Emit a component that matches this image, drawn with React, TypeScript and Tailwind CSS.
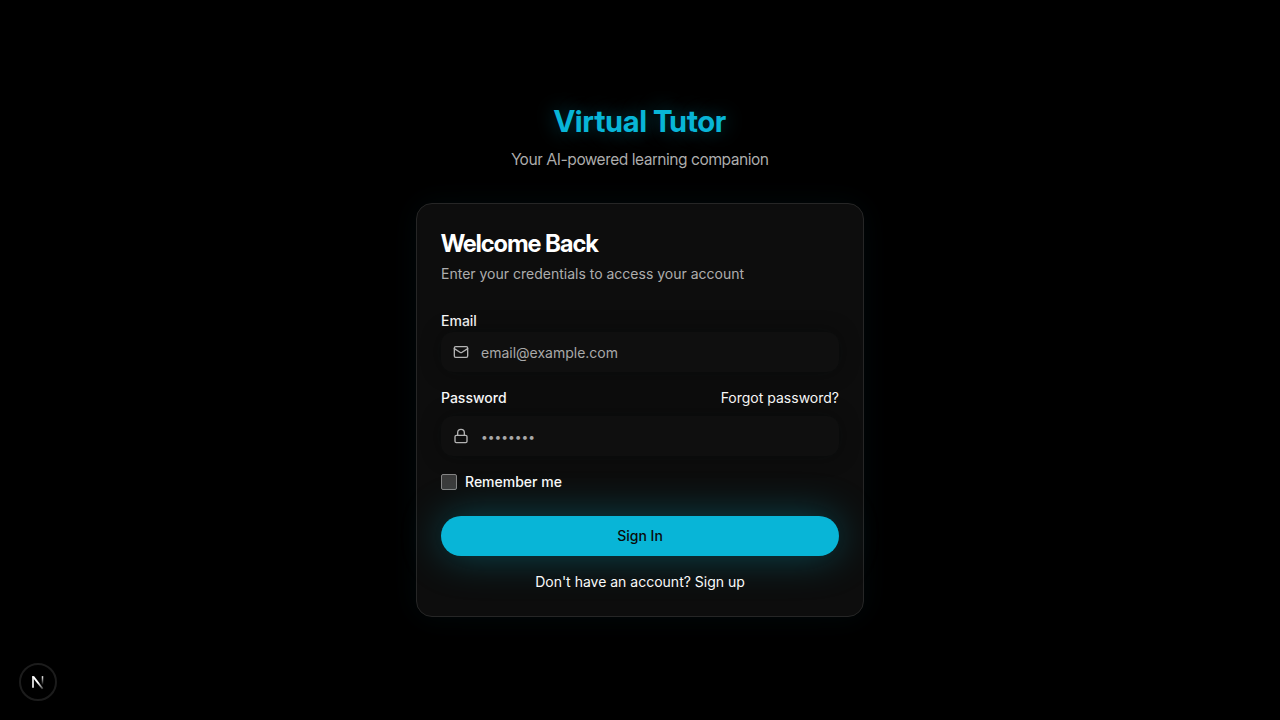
import type { ReactNode } from "react";

function FieldIcon({ children }: { children: ReactNode }) {
  return (
    <svg
      viewBox="0 0 24 24"
      fill="none"
      stroke="currentColor"
      strokeWidth="2"
      strokeLinecap="round"
      strokeLinejoin="round"
      aria-hidden="true"
      className="pointer-events-none absolute left-3 size-4 text-[#b3b3b3]"
    >
      {children}
    </svg>
  );
}

type FieldProps = {
  id: string;
  type: string;
  placeholder: string;
  icon: ReactNode;
};

function Field({ id, type, placeholder, icon }: FieldProps) {
  return (
    <div className="relative flex items-center">
      <input
        id={id}
        name={id}
        type={type}
        placeholder={placeholder}
        className={
          "h-10 w-full rounded-xl bg-[#0f0f0f] pr-3 pl-10 text-white shadow-[0_0_20px_rgba(0,8,8,0.4)] outline-none placeholder:text-[#a9a9a9] focus-visible:ring-1 focus-visible:ring-[#06b6d4] " +
          (type === "password" ? "text-xs" : "text-sm")
        }
      />
      <FieldIcon>{icon}</FieldIcon>
    </div>
  );
}

export default function App() {
  return (
    <main className="relative flex min-h-screen flex-col items-center justify-center bg-black px-4 font-['Inter',sans-serif] text-[#fafafa]">
      <div className="w-full max-w-md">
        <header className="mb-8 text-center font-['Inter_Display','Inter',sans-serif]">
          <h1 className="text-3xl font-bold text-[#08b5d7] [text-shadow:0_0_20px_rgba(6,182,212,0.4)]">
            Virtual Tutor
          </h1>
          <p className="mt-2 text-base text-[#adadad]">Your AI-powered learning companion</p>
        </header>

        <section className="rounded-2xl border border-[#262626] bg-[#0d0d0d] p-6 shadow-[0_0_30px_rgba(6,182,212,0.05)]">
          <h2 className="font-['Inter_Display','Inter',sans-serif] text-2xl font-bold tracking-tight text-white">
            Welcome Back
          </h2>
          <p className="mt-1 text-sm text-[#adadad]">Enter your credentials to access your account</p>

          <form className="mt-6" onSubmit={(event) => event.preventDefault()}>
            <div className="space-y-4">
              <div>
                <label htmlFor="email" className="text-sm font-medium">
                  Email
                </label>
                <Field
                  id="email"
                  type="email"
                  placeholder="email@example.com"
                  icon={
                    <>
                      <rect x="2" y="4" width="20" height="16" rx="2" />
                      <path d="m22 7-8.97 5.7a1.94 1.94 0 0 1-2.06 0L2 7" />
                    </>
                  }
                />
              </div>

              <div className="space-y-2">
                <div className="flex items-center justify-between text-sm">
                  <label htmlFor="password" className="font-medium">
                    Password
                  </label>
                  <a href="#forgot">Forgot password?</a>
                </div>
                <Field
                  id="password"
                  type="password"
                  placeholder="••••••••"
                  icon={
                    <>
                      <rect x="3" y="11" width="18" height="11" rx="2" />
                      <path d="M7 11V7a5 5 0 0 1 10 0v4" />
                    </>
                  }
                />
              </div>

              <div className="flex items-center gap-2">
                <input
                  id="remember"
                  type="checkbox"
                  className="size-4 appearance-none rounded-xs border border-[#858585] bg-[#3b3b3b] checked:bg-[#06b6d4]"
                />
                <label htmlFor="remember" className="text-sm font-medium">
                  Remember me
                </label>
              </div>
            </div>

            <button
              type="submit"
              className="mt-6 h-10 w-full rounded-full bg-[#08b5d7] text-sm font-medium text-[#0a0a0a] shadow-[0_0_40px_rgba(6,182,212,0.35)]"
            >
              Sign In
            </button>
          </form>

          <p className="mt-4 text-center text-sm">
            Don't have an account? <a href="#signup">Sign up</a>
          </p>
        </section>
      </div>

      <button
        type="button"
        aria-label="Open developer tools"
        className="fixed bottom-[19px] left-[19px] flex size-[38px] items-center justify-center rounded-full border-2 border-[#1c1c1c] bg-black"
      >
        <svg viewBox="0 0 24 24" fill="none" className="size-6 shrink-0" aria-hidden="true">
          <defs>
            <linearGradient id="stem" x1="16.5" y1="6" x2="16.5" y2="15" gradientUnits="userSpaceOnUse">
              <stop stopColor="#fff" />
              <stop offset="1" stopColor="#fff" stopOpacity="0" />
            </linearGradient>
            <linearGradient id="diagonal" x1="12" y1="13" x2="17" y2="19.5" gradientUnits="userSpaceOnUse">
              <stop stopColor="#fff" />
              <stop offset="1" stopColor="#fff" stopOpacity="0.2" />
            </linearGradient>
          </defs>
          <path d="M7 6.2v11.6" stroke="#fff" strokeWidth="1.6" />
          <path d="M6.2 6.2H8.2L17.3 18.2L16 19.3L6.2 6.9Z" fill="url(#diagonal)" />
          <path d="M16.5 6.2V15" stroke="url(#stem)" strokeWidth="1.5" />
        </svg>
      </button>
    </main>
  );
}
